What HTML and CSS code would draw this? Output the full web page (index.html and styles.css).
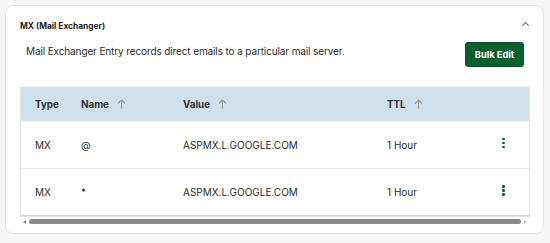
FILE: index.html
```html
<!DOCTYPE html>
<html>
<head>
<meta charset="utf-8">
<link rel="stylesheet" href="styles.css">
</head>
<body>
<div class="card">
  <div class="card-head">
    <span class="title">MX (Mail Exchanger)</span>
    <svg class="chev" width="9" height="6" viewBox="0 0 9 6"><path d="M1.2 4.8 L4.5 1.5 L7.8 4.8" fill="none" stroke="#777" stroke-width="1.1"/></svg>
  </div>
  <div class="desc-row">
    <p class="desc">Mail Exchanger Entry records direct emails to a particular mail server.</p>
    <button class="btn">Bulk Edit</button>
  </div>
  <div class="table-wrap">
    <div class="table">
      <div class="row head">
        <div class="c c-type">Type</div>
        <div class="c c-name">Name <svg class="arr" width="9" height="10" viewBox="0 0 9 10"><path d="M4.5 9.5 V1 M1 4.5 L4.5 1 L8 4.5" fill="none" stroke="#999" stroke-width="1.1"/></svg></div>
        <div class="c c-val">Value <svg class="arr" width="9" height="10" viewBox="0 0 9 10"><path d="M4.5 9.5 V1 M1 4.5 L4.5 1 L8 4.5" fill="none" stroke="#999" stroke-width="1.1"/></svg></div>
        <div class="c c-ttl">TTL <svg class="arr" width="9" height="10" viewBox="0 0 9 10"><path d="M4.5 9.5 V1 M1 4.5 L4.5 1 L8 4.5" fill="none" stroke="#999" stroke-width="1.1"/></svg></div>
        <div class="c c-act"></div>
      </div>
      <div class="row">
        <div class="c c-type">MX</div>
        <div class="c c-name">@</div>
        <div class="c c-val">ASPMX.L.GOOGLE.COM</div>
        <div class="c c-ttl">1 Hour</div>
        <div class="c c-act"><span class="dots"><i></i><i></i><i></i></span></div>
      </div>
      <div class="row last">
        <div class="c c-type">MX</div>
        <div class="c c-name">*</div>
        <div class="c c-val">ASPMX.L.GOOGLE.COM</div>
        <div class="c c-ttl">1 Hour</div>
        <div class="c c-act"><span class="dots"><i></i><i></i><i></i></span></div>
      </div>
    </div>
    <div class="scroll">
      <span class="sa left"></span>
      <span class="thumb"></span>
      <span class="sa right"></span>
    </div>
  </div>
</div>
</body>
</html>
```
FILE: styles.css
```css
html, body {
  margin: 0;
  padding: 0;
}
body {
  background: #f6f6f6;
  font-family: Inter, "Liberation Sans", sans-serif;
  color: #2b2b2b;
  padding: 5px 6px 0 5px;
  width: 550px;
  height: 243px;
  box-sizing: border-box;
}
.card {
  background: #fff;
  border: 1px solid #e4e4e4;
  border-radius: 8px;
  height: 229px;
  box-sizing: border-box;
  padding: 0 13px 0 14px;
}
.card-head {
  display: flex;
  justify-content: space-between;
  align-items: center;
  height: 22px;
  padding-top: 9px;
}
.title {
  font-size: 8.4px;
  font-weight: 700;
  color: #222;
}
.chev {
  margin-right: 0;
  margin-top: -4px;
}
.desc-row {
  display: flex;
  justify-content: space-between;
  align-items: center;
  padding-left: 6px;
  margin-top: 5px;
  padding-right: 6px;
}
.desc {
  margin: 0;
  font-size: 10px;
  letter-spacing: -0.12px;
  color: #2b2b2b;
  margin-top: -8px;
}
.btn {
  background: #04612d;
  color: #fff;
  border: 1px solid #0a4f29;
  border-radius: 3px;
  font-family: Inter, "Liberation Sans", sans-serif;
  font-weight: 700;
  font-size: 9.3px;
  width: 59px;
  height: 25px;
  padding: 0;
}
.table-wrap {
  margin-top: 20px;
}
.table {
  border: 1px solid #e3e3e3;
  border-top: 0;
}
.row {
  display: flex;
  align-items: center;
  height: 47px;
  border-bottom: 1px solid #e8e8e8;
  font-size: 10px;
  color: #2b2b2b;
}
.row.head {
  height: 34px;
  background: #cde0ec;
  font-weight: 700;
  font-size: 9.8px;
  color: #333;
  border-bottom: 0;
}
.row.last {
  height: 46px;
  border-bottom: 1px solid #d6d6d6;
}
.c {
  display: flex;
  align-items: center;
}
.c-type { width: 46px; padding-left: 14px; }
.c-name { width: 102px; }
.c-val { width: 204px; }
.c-ttl { width: 108px; }
.c-act { flex: 1; justify-content: flex-start; padding-left: 7px; }
.arr {
  margin-left: 8px;
}
.dots {
  display: flex;
  flex-direction: column;
  gap: 1.5px;
  margin-top: -3px;
}
.dots i {
  display: block;
  width: 2.5px;
  height: 2.5px;
  border-radius: 50%;
  background: #0a5c2e;
}
.scroll {
  display: flex;
  align-items: center;
  height: 9px;
  padding: 0 3px;
}
.thumb {
  flex: 1;
  height: 5px;
  background: #8a8a8a;
  border-radius: 3px;
  margin: 0 3px;
}
.sa {
  width: 0;
  height: 0;
  border-top: 2.5px solid transparent;
  border-bottom: 2.5px solid transparent;
}
.sa.left { border-right: 3px solid #8a8a8a; }
.sa.right { border-left: 3px solid #bbb; }
```
